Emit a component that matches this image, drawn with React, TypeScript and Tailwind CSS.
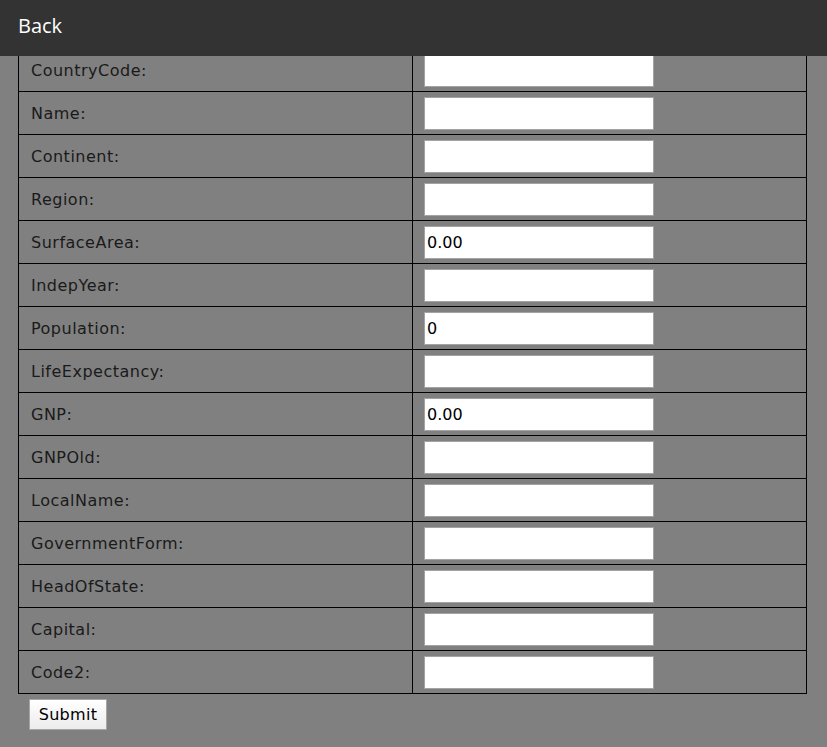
import React from 'react';

const fields: { label: string; value: string }[] = [
  { label: 'CountryCode:', value: '' },
  { label: 'Name:', value: '' },
  { label: 'Continent:', value: '' },
  { label: 'Region:', value: '' },
  { label: 'SurfaceArea:', value: '0.00' },
  { label: 'IndepYear:', value: '' },
  { label: 'Population:', value: '0' },
  { label: 'LifeExpectancy:', value: '' },
  { label: 'GNP:', value: '0.00' },
  { label: 'GNPOld:', value: '' },
  { label: 'LocalName:', value: '' },
  { label: 'GovernmentForm:', value: '' },
  { label: 'HeadOfState:', value: '' },
  { label: 'Capital:', value: '' },
  { label: 'Code2:', value: '' },
];

const App: React.FC = () => {
  return (
    <div className="min-h-[747px] bg-[#808080] font-['DejaVu_Sans',sans-serif] text-[#1a1a1a]">
      {/* fixed top bar, content scrolls under it */}
      <header className="fixed top-0 left-0 right-0 z-10 h-[56px] bg-[#333333] flex items-center px-[18px] pb-[4px]">
        <span className="text-white text-[20px] font-['Open_Sans',sans-serif]">Back</span>
      </header>

      <form className="pt-[48px] pl-[18px]">
        <table className="w-[789px] border-collapse">
          <tbody>
            {fields.map((f) => (
              <tr key={f.label} className="h-[43px]">
                <td className="w-[394px] border border-black pl-[12px] pt-[2px] text-[16px] tracking-[0.5px]">{f.label}</td>
                <td className="border border-black pl-[11px]">
                  <input
                    type="text"
                    defaultValue={f.value}
                    className="block w-[230px] h-[33px] bg-white border border-[#a3a3a3] px-[2px] text-[16px] text-black outline-none"
                  />
                </td>
              </tr>
            ))}
          </tbody>
        </table>
        <button
          type="button"
          className="mt-[5px] ml-[11px] w-[78px] h-[31px] border border-[#a6a6a6] bg-gradient-to-b from-white to-[#ececec] text-[16px] text-black tracking-[0.3px]"
        >
          Submit
        </button>
      </form>
    </div>
  );
};

export default App;
